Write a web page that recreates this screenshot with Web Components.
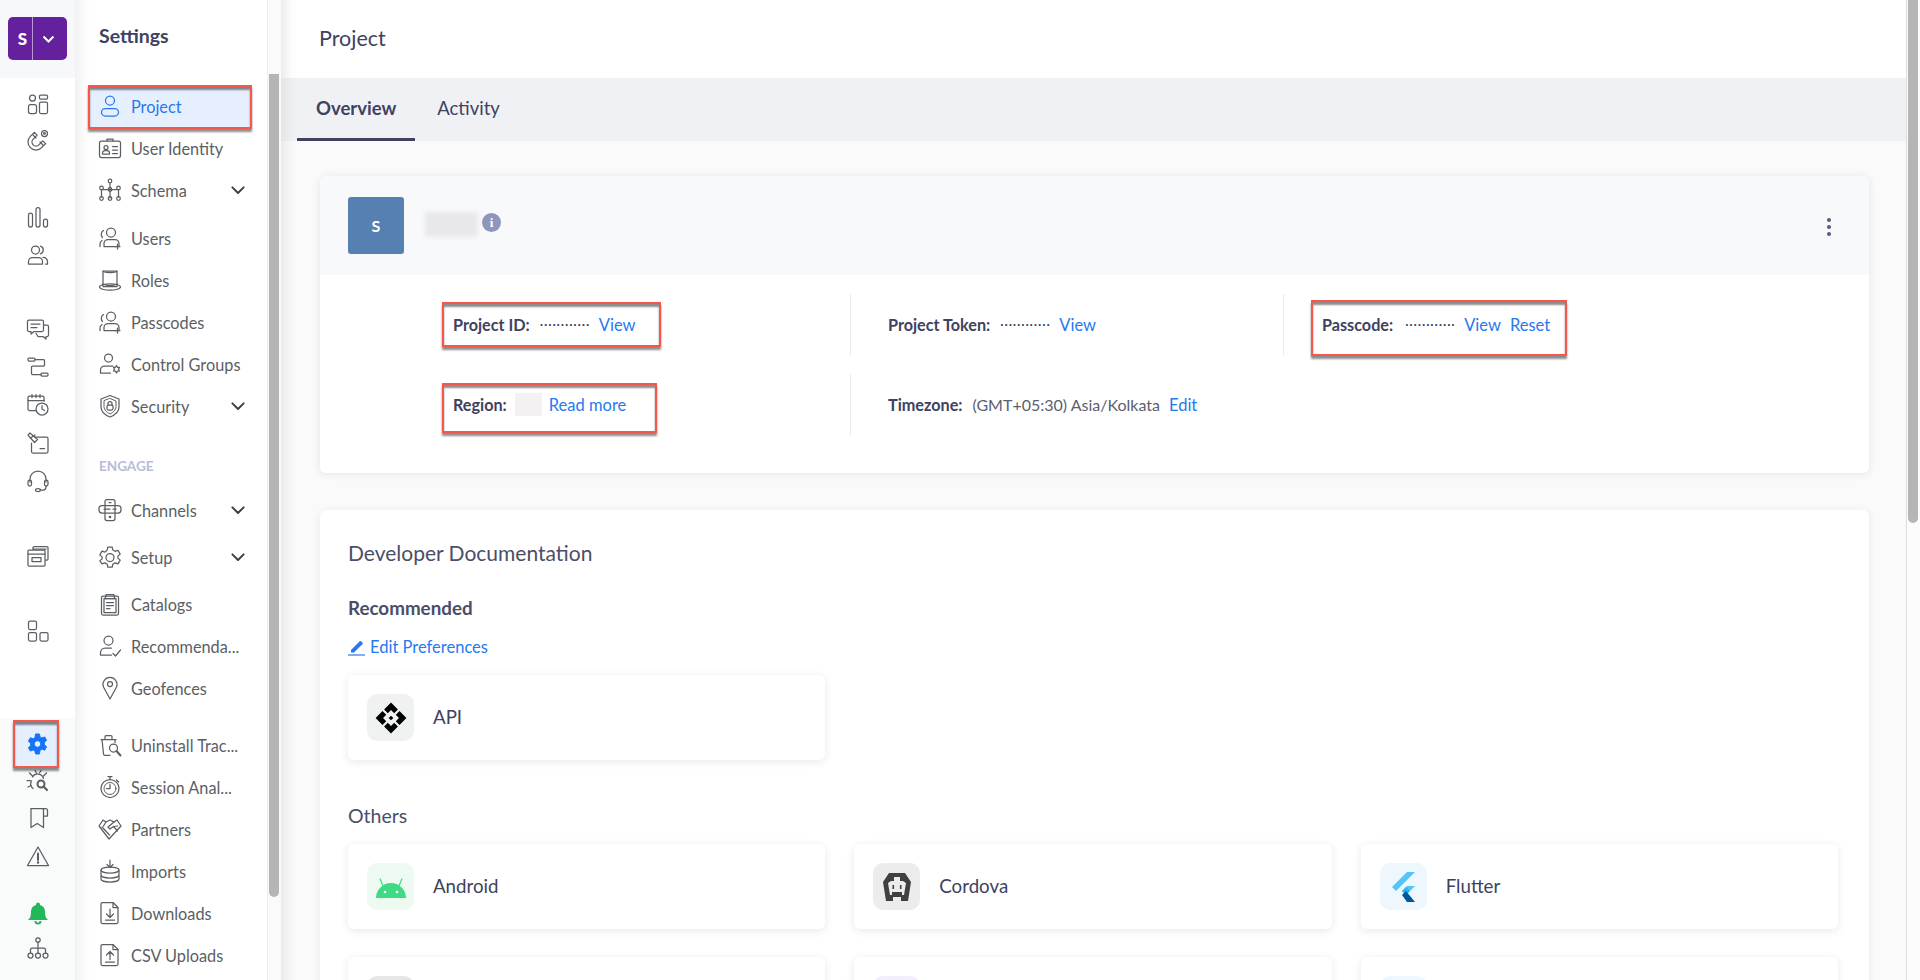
<!DOCTYPE html>
<html>
<head>
<meta charset="utf-8">
<title>Project</title>
<style>
  html, body { margin: 0; height: 980px; overflow: hidden; }
  body { font-family: "Lato", "Liberation Sans", sans-serif; color: #3e4260; background: #fff; display: flex; }
</style>
</head>
<body>
<app-rail></app-rail>
<settings-nav></settings-nav>
<project-page></project-page>

<script>
// stroke icons, all on a 24 box
const ICONS = {
  dashboard: '<circle cx="6.5" cy="6" r="3"/><rect x="13.5" y="3" width="8" height="4" rx="1"/><rect x="2.5" y="12.5" width="8" height="9" rx="2"/><rect x="13.5" y="10" width="8" height="11.5" rx="1.5"/>',
  magnet: '<path d="M8.34 4.34 4.34 8.34A8 8 0 0 0 15.66 19.66L19.66 15.66 16.83 12.83 12.83 16.83A4 4 0 0 1 7.17 11.17L11.17 7.17Z"/><path d="M7 7l3 3M14 14l3 3"/><circle cx="18.5" cy="5.5" r="3"/><circle cx="18.5" cy="5.5" r=".8"/>',
  bars: '<rect x="2.5" y="8" width="4" height="14" rx="2"/><rect x="10" y="2.5" width="4" height="19.5" rx="2"/><rect x="17.5" y="14" width="4" height="8" rx="2"/>',
  people: '<circle cx="9.5" cy="7" r="4"/><path d="M2.5 21v-2.5a4 4 0 0 1 4-4h6a4 4 0 0 1 4 4V21z"/><path d="M14.5 3.2a4 4 0 0 1 0 7.6M17 14.5a4 4 0 0 1 4.5 4V21h-2"/>',
  chat: '<path d="M3 3h13a1.5 1.5 0 0 1 1.5 1.5V13a1.5 1.5 0 0 1-1.5 1.5H8l-3 2.5v-2.5H3A1.5 1.5 0 0 1 1.5 13V4.5A1.5 1.5 0 0 1 3 3z"/><path d="M5 7h9M5 10.5h6"/><path d="M17.5 8H21a1.5 1.5 0 0 1 1.5 1.5V18a1.5 1.5 0 0 1-1.5 1.5h-1V22l-3-2.500h-5l-2-3"/>',
  flow: '<rect x="2" y="3" width="7" height="3" rx="1"/><rect x="15" y="18" width="7" height="3" rx="1"/><path d="M9 4.5h8.500a1 1 0 0 1 1 1V10a1 1 0 0 1-1 1H6.500a1 1 0 0 0-1 1v6.500a1 1 0 0 0 1 1H15"/>',
  calclock: '<path d="M10 17.5H3.5A1.5 1.5 0 0 1 2 16V4.500A1.5 1.5 0 0 1 3.500 3h13A1.5 1.5 0 0 1 18 4.500V8"/><path d="M2 7.500h16M6 1.500v3M10 1.500v3M14 1.500v3"/><circle cx="16" cy="16" r="6"/><path d="M16 12.500V16l2.500 1.500"/>',
  sweep: '<path d="M9 6h11.500a1.500 1.500 0 0 1 1.500 1.500v13a1.500 1.500 0 0 1-1.500 1.500H7a1.500 1.500 0 0 1-1.500-1.500V12"/><path d="M14 17.500h4.500"/><path d="M2 4l2-2 7.500 6.500-3 3z"/><path d="M4.500 7 9 4"/>',
  headset: '<path d="M4 13V10a8 8 0 0 1 16 0v3"/><rect x="2" y="11" width="3.500" height="6" rx="1.700"/><rect x="18.500" y="11" width="3.500" height="6" rx="1.700"/><path d="M20 17v1a3 3 0 0 1-3 3h-3"/><ellipse cx="12" cy="21" rx="2.500" ry="1.500"/>',
  windows: '<path d="M7 5V3.500A1 1 0 0 1 8 2.500h13A1 1 0 0 1 22 3.500V15a1 1 0 0 1-1 1h-1.500"/><rect x="2" y="6" width="17" height="16" rx="1"/><path d="M2 10h17M7 5h13M6 13.500h9v4H6z"/>',
  blocks: '<rect x="2.500" y="2" width="8" height="8.500" rx="1.500"/><rect x="2.500" y="13.500" width="8" height="8.500" rx="1.500"/><rect x="14" y="13.500" width="8" height="8.500" rx="1.500"/>',
  bug: '<path d="M17.500 10.500A6 6 0 0 0 6.500 9M7 20.500A6 6 0 0 1 5.500 13"/><path d="M6.500 8 3.500 5M17.500 8l3-3M4.500 12.500H1M5 17.500l-3 1.500M9 2.500l1.500 2.500M15 2.500 13.500 5"/><circle cx="15" cy="16" r="3.500" stroke-width="2"/><path d="M17.500 18.500 21 22" stroke-width="2.200"/>',
  bookmark: '<path d="M5 2.500h14.500a2 2 0 0 1 2 2V10h-4M17.500 4.500V4a1.500 1.500 0 0 0-1.500-1.500"/><path d="M5 2.500v19l6.200-4 6.300 4V4.500"/>',
  warn: '<path d="M12 3 22.500 21.500h-21z"/><path d="M12 9.500v6.500" stroke-width="2"/><circle cx="12" cy="18.500" r=".6" fill="currentColor"/>',
  tree: '<circle cx="12" cy="4" r="2.200"/><path d="M12 6.200V12M4.500 17v-3.500a1.500 1.500 0 0 1 1.500-1.500h12a1.500 1.500 0 0 1 1.500 1.500V17M12 12v5"/><circle cx="4.500" cy="19.500" r="2.500"/><circle cx="12" cy="19.500" r="2.500"/><circle cx="19.500" cy="19.500" r="2.500"/>',
  user: '<circle cx="12" cy="6.500" r="4.500"/><rect x="3.500" y="14.500" width="17" height="7.500" rx="3.700"/>',
  idcard: '<rect x="1.500" y="5" width="21" height="16.500" rx="2"/><path d="M9 5V3h6v2"/><circle cx="8" cy="11.500" r="2"/><path d="M4.500 18v-1a2.500 2.500 0 0 1 2.500-2.500h2a2.500 2.500 0 0 1 2.500 2.500v1zM14.500 10.500h5M14.500 14h5M14.500 17.500h5"/>',
  schema: '<circle cx="12" cy="3" r="1.800"/><path d="M12 4.800V20M3.500 11.500h17M3.500 11.500V19M20.500 11.500V19"/><circle cx="3.500" cy="10" r="1.800"/><circle cx="20.500" cy="10" r="1.800"/><circle cx="12" cy="11.500" r="1.800"/><circle cx="3.500" cy="20.500" r="1.800"/><circle cx="12" cy="20.500" r="1.800"/><circle cx="20.500" cy="20.500" r="1.800"/>',
  userplus: '<circle cx="13" cy="6.500" r="4.500"/><path d="M5.500 4.500a4.500 4.500 0 0 0-1 7"/><path d="M21 20.500v-3a4 4 0 0 0-4-4H10a4 4 0 0 0-4 4v3h12"/><path d="M2 20.500v-2.500a4 4 0 0 1 2-3.500M19.500 18v5M17 20.500h5"/>',
  hat: '<path d="M5 3h14v15.500H5z"/><path d="M5 3a7 1.500 0 0 0 14 0M5 16c4 2 10 2 14 0"/><ellipse cx="12" cy="19" rx="10.500" ry="3.200"/>',
  control: '<circle cx="10.500" cy="6" r="4"/><path d="M15 14H6.500A4 4 0 0 0 2.500 18v3h10"/><path d="M18.500 13.500l1 1.800 2 .1-1 1.800 1 1.800-2 .1-1 1.800-1-1.800-2-.1 1-1.800-1-1.800 2-.1z"/>',
  shield: '<path d="M12 1.500 21 5v8c0 5-4 8-9 10-5-2-9-5-9-10V5z"/><path d="M12 4.500 18 7v5.500c0 3.500-3 6-6 7.500-3-1.500-6-4-6-7.500V7z" stroke-width="1"/><rect x="9" y="11" width="6" height="5" rx="1.500"/><path d="M10 11V9.500a2 2 0 0 1 4 0V11"/>',
  channels: '<rect x="7" y="1.500" width="10" height="21" rx="2"/><rect x="1" y="7.500" width="22" height="7.500" rx="3"/><path d="M6 11.200h6M15 11.200h3M11 4.500h2"/><circle cx="12" cy="19" r=".7" fill="currentColor"/>',
  gear: '<path d="M9.800 2h4.400l.6 3 2.300 1.300 2.900-1 2.200 3.800-2.300 2 0 2 2.300 2-2.200 3.800-2.900-1-2.300 1.300-.6 3H9.800l-.6-3-2.300-1.300-2.900 1L1.800 15.900l2.300-2 0-2-2.300-2 2.200-3.800 2.900 1L9.200 5z"/><circle cx="12" cy="12.500" r="4"/>',
  clipboard: '<rect x="3.500" y="4" width="17" height="19" rx="1.500"/><rect x="6" y="6.500" width="12" height="14"/><path d="M8 4V2.500h8V4l1 2.500H7zM8.500 10.500h7M8.500 13.500h7M8.500 16.500h3.500"/>',
  rec: '<circle cx="10.500" cy="6.500" r="4.500"/><path d="M13.500 14H7a4.500 4.500 0 0 0-4.500 4.500V21h11"/><path d="M15 19.500l2.500 2.500 5-6"/>',
  pin: '<path d="M12 23 5.500 11a7 7 0 1 1 13 0z"/><circle cx="12" cy="8" r="2.500"/>',
  trash: '<path d="M3 6.500h15M7 6.500V3.500a1 1 0 0 1 1-1h5a1 1 0 0 1 1 1v3"/><path d="M4 6.500 5.500 21a1.500 1.500 0 0 0 1.500 1.300h5"/><path d="M17 6.500v3"/><circle cx="15.500" cy="15" r="4"/><path d="M18.500 18 22.500 22.500" stroke-width="2"/>',
  stopwatch: '<circle cx="12" cy="13.500" r="9"/><circle cx="12" cy="13.500" r="6" stroke-width="1"/><path d="M12 9.500v4H8.500M10 1.500h4M12 1.500v3M18.500 5l2 2"/>',
  handshake: '<path d="M12 3 16 5l3-2 4 6-12 13L1 9l4-6 3 2z"/><path d="M4 10l7.500 8M16 5l-6 5 2 2 3.500-2.500 4 4.500M8 5 5.500 9M15.500 9.500 19.500 9"/>',
  dbdown: '<ellipse cx="12" cy="11" rx="9" ry="3"/><path d="M3 11v9c0 1.700 4 3 9 3s9-1.300 9-3v-9M3 16c0 1.700 4 3 9 3s9-1.300 9-3M12 1v7M9 5.500 12 8.500l3-3"/>',
  docdown: '<path d="M4.500 1.500H15l5 5V21a1.500 1.500 0 0 1-1.500 1.500h-14A1.500 1.500 0 0 1 3 21V3a1.500 1.500 0 0 1 1.500-1.500z"/><path d="M15 1.500V6.500h5M12 8v8M8.500 13 12 16.500 15.500 13M7.500 19h9"/>',
  docup: '<path d="M4.500 1.500H15l5 5V21a1.500 1.500 0 0 1-1.500 1.500h-14A1.500 1.500 0 0 1 3 21V3a1.500 1.500 0 0 1 1.500-1.500z"/><path d="M15 1.500V6.500h5M12 16.500v-8M8.500 12 12 8.500 15.500 12M7.500 19h9"/>',
  chevron: '<path d="M4.500 8.500 12 16l7.500-7.500" stroke-width="2.600"/>'
};

class UiIcon extends HTMLElement {
  connectedCallback() {
    const size = this.getAttribute("size") || 24;
    const root = this.attachShadow({ mode: "open" });
    root.innerHTML = `<style>
      :host { display: inline-flex; width: ${size}px; height: ${size}px; flex: none; }
      svg { width: 100%; height: 100%; fill: none; stroke: currentColor; stroke-width: 1.25; stroke-linecap: round; stroke-linejoin: round; }
    </style><svg viewBox="0 0 24 24">${ICONS[this.getAttribute("name")] || ""}</svg>`;
  }
}
customElements.define("ui-icon", UiIcon);

class RailIcon extends HTMLElement {
  connectedCallback() {
    const root = this.attachShadow({ mode: "open" });
    root.innerHTML = `<style>
      :host { display: flex; align-items: center; justify-content: center; height: 38px; color: #5b5f64; }
    </style><ui-icon name="${this.getAttribute("name")}"></ui-icon>`;
  }
}
customElements.define("rail-icon", RailIcon);

class AppRail extends HTMLElement {
  connectedCallback() {
    const root = this.attachShadow({ mode: "open" });
    root.innerHTML = `<style>
      :host { display: flex; flex-direction: column; width: 75px; height: 980px; flex: none; background: #fff; }
      .top { height: 78px; flex: none; background: #f7f8fb; display: flex; align-items: flex-start; justify-content: center; }
      .logo { margin-top: 17px; width: 59px; height: 43px; border-radius: 5px; background: #65209e; color: #fff; display: flex; font: 700 17px "Lato", sans-serif; }
      .logo b { width: 25px; padding-left: 5px; box-sizing: border-box; display: flex; align-items: center; justify-content: center; border-right: 1px solid #b99ad6; }
      .logo span { flex: 1; padding-right: 4px; display: flex; align-items: center; justify-content: center; }
      .logo svg { width: 13px; height: 8px; fill: none; stroke: #fff; stroke-width: 2; }
      .g { flex: none; }
      .short rail-icon { height: 36px; }
      .bottom { margin-top: auto; height: 262px; flex: none; background: #f9fafa; padding-top: 2px; box-sizing: border-box; }
      .active { height: 48px; display: flex; align-items: center; justify-content: center; padding-left: 2px; box-sizing: border-box; margin: 0 16px 0 13px; background: #e5effd; position: relative; }
      .active::after { content: ""; position: absolute; inset: 0; border: 2px solid #f5574b; box-shadow: 0 3px 2px rgba(0,0,0,.45), inset 0 3px 2px rgba(0,0,0,.45); }
      .bell { display: flex; justify-content: center; margin-top: 26px; height: 24px; }
    </style>
    <div class="top"><div class="logo"><b>S</b><span><svg viewBox="0 0 13 8"><path d="M1.500 1.500 6.500 6.500 11.500 1.500"/></svg></span></div></div>
    <div class="g short" style="margin-top:8px">
      <rail-icon name="dashboard"></rail-icon>
      <rail-icon name="magnet"></rail-icon>
    </div>
    <div class="g" style="margin-top:40px">
      <rail-icon name="bars"></rail-icon>
      <rail-icon name="people"></rail-icon>
    </div>
    <div class="g" style="margin-top:36px">
      <rail-icon name="chat"></rail-icon>
      <rail-icon name="flow"></rail-icon>
      <rail-icon name="calclock"></rail-icon>
      <rail-icon name="sweep"></rail-icon>
      <rail-icon name="headset"></rail-icon>
    </div>
    <div class="g" style="margin-top:37px"><rail-icon name="windows"></rail-icon></div>
    <div class="g" style="margin-top:37px"><rail-icon name="blocks"></rail-icon></div>
    <div class="bottom">
      <div class="active"><svg viewBox="0 0 24 24" style="width:23px;height:23px;fill:#1573f5"><path fill-rule="evenodd" d="M10 1h4l.7 3.100 1.800 1 3-1 2 3.500-2.300 2.100v2.600l2.300 2.100-2 3.500-3-1-1.800 1L14 21.900h-4l-.7-3.100-1.800-1-3 1-2-3.500 2.300-2.100v-2.600L2.500 8.500l2-3.500 3 1 1.800-1zM12 8a3.400 3.400 0 1 0 0 6.900A3.400 3.400 0 0 0 12 8z" stroke="#1573f5" stroke-width="1" stroke-linejoin="round"/></svg></div>
      <rail-icon name="bug" style="margin-top:-7px"></rail-icon>
      <rail-icon name="bookmark"></rail-icon>
      <rail-icon name="warn"></rail-icon>
      <div class="bell"><svg viewBox="0 0 24 24" style="width:24px;height:24px;fill:#22b85a"><path d="M12 1.500a2 2 0 0 1 2 2v.5a7 7 0 0 1 5 6.500c0 5 1 6.500 3 8.500H2c2-2 3-3.500 3-8.500A7 7 0 0 1 10 4v-.5a2 2 0 0 1 2-2z"/><path d="M8.500 20h7a3.500 3.500 0 0 1-7 0zm2 0a1.500 1.500 0 0 0 3 0z" fill-rule="evenodd"/></svg></div>
      <rail-icon name="tree" style="margin-top:4px"></rail-icon>
    </div>`;
  }
}
customElements.define("app-rail", AppRail);

class NavItem extends HTMLElement {
  connectedCallback() {
    const root = this.attachShadow({ mode: "open" });
    const more = this.hasAttribute("more")
      ? `<ui-icon class="more" name="chevron" size="18"></ui-icon>` : "";
    root.innerHTML = `<style>
      :host { display: flex; align-items: center; height: 42px; padding-left: 23px; margin-right: 13px; position: relative; color: #5b5f64; font-size: 16.3px; white-space: nowrap; }
      ui-icon { margin-right: 9px; }
      .more { margin: 0 7px 0 auto; color: #3b3f45; }
      :host([active]) { color: #2878f0; background: #e5effd; margin: 0 15px 0 13px; padding-left: 10px; }
      :host([active])::after { content: ""; position: absolute; inset: 0 0 -2px 0; border: 2px solid #f5574b; box-shadow: 0 3px 2px rgba(0,0,0,.45), inset 0 3px 2px rgba(0,0,0,.45); }
    </style><ui-icon name="${this.getAttribute("icon")}"></ui-icon><span><slot></slot></span>${more}`;
  }
}
customElements.define("nav-item", NavItem);

class SettingsNav extends HTMLElement {
  connectedCallback() {
    const root = this.attachShadow({ mode: "open" });
    root.innerHTML = `<style>
      :host { display: flex; width: 206px; height: 980px; flex: none; background: #fff; box-shadow: inset 18px 0 14px -14px #ececec; overflow: hidden; }
      .list { flex: 1; min-width: 0; }
      h2 { margin: 0; padding: 24px 0 0 24px; height: 60px; box-sizing: border-box; font-size: 19.5px; font-weight: 700; color: #3e4260; }
      .label { margin: 29px 0 0 24px; height: 20px; line-height: 20px; font-size: 13.5px; font-weight: 700; color: #b7bcd8; }
      .bar { width: 14px; flex: none; border-left: 1px solid #eee; box-sizing: border-box; background: #fafafa; }
      .thumb { margin: 74px 0 0 1px; height: 823px; width: 10px; background: #b5b5b5; border-radius: 0 0 5px 5px; }
    </style>
    <div class="list">
      <h2>Settings</h2>
      <nav-item icon="user" active style="margin-top:25px">Project</nav-item>
      <nav-item icon="idcard">User Identity</nav-item>
      <nav-item icon="schema" more>Schema</nav-item>
      <nav-item icon="userplus" style="margin-top:6px">Users</nav-item>
      <nav-item icon="hat">Roles</nav-item>
      <nav-item icon="userplus">Passcodes</nav-item>
      <nav-item icon="control">Control Groups</nav-item>
      <nav-item icon="shield" more>Security</nav-item>
      <div class="label">ENGAGE</div>
      <nav-item icon="channels" more style="margin-top:13px">Channels</nav-item>
      <nav-item icon="gear" more style="margin-top:5px">Setup</nav-item>
      <nav-item icon="clipboard" style="margin-top:5px">Catalogs</nav-item>
      <nav-item icon="rec">Recommenda...</nav-item>
      <nav-item icon="pin">Geofences</nav-item>
      <nav-item icon="trash" style="margin-top:15px">Uninstall Trac...</nav-item>
      <nav-item icon="stopwatch">Session Anal...</nav-item>
      <nav-item icon="handshake">Partners</nav-item>
      <nav-item icon="dbdown">Imports</nav-item>
      <nav-item icon="docdown">Downloads</nav-item>
      <nav-item icon="docup">CSV Uploads</nav-item>
    </div>
    <div class="bar"><div class="thumb"></div></div>`;
  }
}
customElements.define("settings-nav", SettingsNav);

class InfoField extends HTMLElement {
  connectedCallback() {
    const root = this.attachShadow({ mode: "open" });
    root.innerHTML = `<style>
      :host { display: inline-flex; align-items: center; height: 24px; position: relative; font-size: 16px; color: #5b5f6e; white-space: nowrap; }
      b { font-size: 16.2px; font-weight: 700; color: #3e4260; margin-right: var(--gap, 10px); }
      :host([marked])::after { content: ""; position: absolute; top: var(--mt); bottom: var(--mb); left: -11px; right: var(--mr); border: 2px solid #f5574b; box-shadow: 0 3px 2px rgba(0,0,0,.45), inset 0 3px 2px rgba(0,0,0,.45); }
    </style><b>${this.getAttribute("label")}</b><slot></slot>`;
  }
}
customElements.define("info-field", InfoField);

class DotMask extends HTMLElement {
  connectedCallback() {
    this.attachShadow({ mode: "open" }).innerHTML = `<style>
      :host { display: inline-block; width: 50px; overflow: hidden; font: 700 12px/24px "Liberation Sans", sans-serif; letter-spacing: .2px; color: #3e4260; }
    </style>············`;
  }
}
customElements.define("dot-mask", DotMask);

class RegionMask extends HTMLElement {
  connectedCallback() {
    this.attachShadow({ mode: "open" }).innerHTML = `<style>
      :host { display: block; width: 27px; height: 23px; margin-right: -2px; background: #f3f1f2; }
    </style>`;
  }
}
customElements.define("region-mask", RegionMask);

class LinkText extends HTMLElement {
  connectedCallback() {
    this.attachShadow({ mode: "open" }).innerHTML = `<style>
      :host { color: #2878f0; margin-left: 9px; font-size: 16.5px; }
    </style><slot></slot>`;
  }
}
customElements.define("link-text", LinkText);

class ProjectCard extends HTMLElement {
  connectedCallback() {
    const root = this.attachShadow({ mode: "open" });
    root.innerHTML = `<style>
      :host { display: block; background: #fff; border-radius: 6px; box-shadow: 0 1px 8px rgba(40,44,70,.1); overflow: hidden; }
      .head { height: 99px; background: #f8f9fb; display: flex; align-items: center; padding: 0 28px; box-sizing: border-box; }
      .avatar { width: 56px; height: 57px; border-radius: 3px; background: #5680b2; color: #fff; font-weight: 700; font-size: 16px; display: flex; align-items: center; justify-content: center; }
      .name { width: 53px; height: 25px; margin: -2px 4px 0 21px; background: #e8e8eb; filter: blur(2px); }
      .info { width: 19px; height: 19px; margin-top: -7px; border-radius: 50%; background: #8f96bb; color: #fff; font: 700 13px/19px "Liberation Serif", serif; text-align: center; }
      .kebab { margin: 2px 10px 0 auto; display: flex; flex-direction: column; gap: 3px; }
      .kebab i { width: 4px; height: 4px; border-radius: 50%; background: #565b80; }
      .grid { display: grid; grid-template-columns: 531px 433px 1fr; grid-auto-rows: 61px; row-gap: 19px; padding: 19px 0 38px; }
      .cell { display: flex; align-items: center; padding-left: 37px; }
      .cell.first { padding-left: 133px; }
      .cell.rule { border-right: 1px solid #ebebeb; }
      .cell.last { padding-left: 38px; }
    </style>
    <div class="head">
      <div class="avatar">S</div><div class="name"></div><div class="info">i</div>
      <div class="kebab"><i></i><i></i><i></i></div>
    </div>
    <div class="grid">
      <div class="cell first rule"><slot name="id"></slot></div>
      <div class="cell rule"><slot name="token"></slot></div>
      <div class="cell last"><slot name="pass"></slot></div>
      <div class="cell first rule"><slot name="region"></slot></div>
      <div class="cell"><slot name="zone"></slot></div>
    </div>`;
  }
}
customElements.define("project-card", ProjectCard);

class DocCard extends HTMLElement {
  connectedCallback() {
    const root = this.attachShadow({ mode: "open" });
    root.innerHTML = `<style>
      :host { display: flex; align-items: center; height: 85px; padding-left: 19px; box-sizing: border-box; background: #fff; border-radius: 6px; box-shadow: 0 2px 8px rgba(40,44,70,.1); font-size: 18.7px; color: #3e4260; }
      .tile { width: 47px; height: 47px; border-radius: 10px; margin-right: 19px; display: flex; align-items: center; justify-content: center; background: var(--tile, #f0f2f2); flex: none; }
      span { margin-top: -2px; }
    </style><div class="tile"><slot name="logo"></slot></div><span><slot></slot></span>`;
  }
}
customElements.define("doc-card", DocCard);

class ProjectPage extends HTMLElement {
  connectedCallback() {
    const root = this.attachShadow({ mode: "open" });
    root.innerHTML = `<style>
      :host { display: flex; flex: 1; min-width: 0; height: 980px; overflow: hidden; }
      .main { flex: 1; min-width: 0; background: #fafafa; box-shadow: inset 18px 0 14px -14px #e6e6e6; }
      header { height: 78px; background: #fff; box-shadow: inset 18px 0 14px -14px #e6e6e6; padding: 25px 0 0 38px; box-sizing: border-box; font-size: 21.5px; color: #3e4260; }
      .tabs { height: 63px; background: #f0f1f5; box-shadow: inset 18px 0 14px -14px #e0e0e0; display: flex; padding-left: 16px; box-sizing: border-box; font-size: 18.5px; }
      .tab { height: 63px; box-sizing: border-box; padding: 19px 19px 0; }
      .tab.on { font-weight: 700; border-bottom: 3px solid #3e4260; margin-right: 3px; }
      .content { padding: 35px 37px 0 39px; }
      .docs { margin-top: 37px; background: #fff; border-radius: 6px; box-shadow: 0 1px 8px rgba(40,44,70,.08); padding: 30px 31px 40px 28px; height: 600px; box-sizing: border-box; }
      h3 { margin: 0; font-size: 21px; line-height: 26px; font-weight: 400; color: #4a4e69; }
      h4 { margin: 31px 0 0; font-size: 18.8px; line-height: 22px; font-weight: 700; color: #4a4e69; }
      h4.others { margin-top: 45px; font-size: 19.5px; font-weight: 400; }
      .edit { display: flex; align-items: center; gap: 5px; margin-top: 17px; height: 22px; color: #2878f0; font-size: 16.5px; }
      .edit svg { width: 17px; height: 17px; }
      .grid { display: grid; grid-template-columns: repeat(3, 1fr); column-gap: 29px; row-gap: 28px; margin-top: 17px; }
      .scroll { width: 14px; flex: none; background: #fcfcfc; border-left: 1px solid #ddd; box-sizing: border-box; }
      .scroll div { margin: 0 1px; width: 10px; height: 523px; border-radius: 0 0 5px 5px; background: #b5b5b5; }
      svg { display: block; }
    </style>
    <div class="main">
      <header>Project</header>
      <div class="tabs"><div class="tab on">Overview</div><div class="tab">Activity</div></div>
      <div class="content">
        <project-card>
          <info-field slot="id" marked label="Project ID:" style="--mt:-11px;--mb:-10px;--mr:-25px"><dot-mask></dot-mask><link-text>View</link-text></info-field>
          <info-field slot="token" label="Project Token:"><dot-mask></dot-mask><link-text>View</link-text></info-field>
          <info-field slot="pass" marked label="Passcode:" style="--gap:12px;--mt:-13px;--mb:-19px;--mr:-17px"><dot-mask></dot-mask><link-text>View</link-text><link-text>Reset</link-text></info-field>
          <info-field slot="region" marked label="Region:" style="--gap:8px;--mt:-10px;--mb:-16px;--mr:-31px"><region-mask></region-mask><link-text>Read more</link-text></info-field>
          <info-field slot="zone" label="Timezone:">(GMT+05:30) Asia/Kolkata<link-text>Edit</link-text></info-field>
        </project-card>
        <div class="docs">
          <h3>Developer Documentation</h3>
          <h4>Recommended</h4>
          <div class="edit"><svg viewBox="0 0 17 17"><path fill="#2878f0" d="M3 11 11.500 2.500a1.300 1.300 0 0 1 1.800 0l1 1a1.300 1.300 0 0 1 0 1.800L6 13.500H3z"/><path stroke="#2878f0" stroke-width="1.200" d="M0 16h17"/></svg><span>Edit Preferences</span></div>
          <div class="grid">
            <doc-card><svg slot="logo" width="34" height="34" viewBox="0 0 32 32"><path d="M16 1.500 22.500 8 19 11.500 16 8.500 13 11.500 9.500 8z"/><path d="M16 1.500 22.500 8 19 11.500 16 8.500 13 11.500 9.500 8z" transform="rotate(90 16 16)"/><path d="M16 1.500 22.500 8 19 11.500 16 8.500 13 11.500 9.500 8z" transform="rotate(180 16 16)"/><path d="M16 1.500 22.500 8 19 11.500 16 8.500 13 11.500 9.500 8z" transform="rotate(270 16 16)"/><path d="M16 13.800 18.200 16 16 18.200 13.800 16z"/></svg>API</doc-card>
          </div>
          <h4 class="others">Others</h4>
          <div class="grid">
            <doc-card style="--tile:#ecfaf1"><svg slot="logo" width="32" height="32" viewBox="0 0 32 32"><path d="M1 27a15 15 0 0 1 30 0z" fill="#3ddc84"/><path d="M8 15 5 7.500M24 15l3-7.500" stroke="#3ddc84" stroke-width="1.200"/><circle cx="10" cy="21" r="1.300" fill="#fff"/><circle cx="22" cy="21" r="1.300" fill="#fff"/></svg>Android</doc-card>
            <doc-card style="--tile:#ececec"><svg slot="logo" width="30" height="30" viewBox="0 0 30 30"><path fill="#404040" d="M7 1h16l6 9-3 19h-7v-4h-8v4H4L1 10z"/><path fill="#ececec" d="M9 9h3V5h6v4h3l3 2-2 12h-2v-3H10v3H8L6 11z"/><rect x="12" y="2" width="6" height="3" fill="#404040"/><rect x="10.500" y="13" width="1.600" height="4" fill="#404040"/><rect x="17.900" y="13" width="1.600" height="4" fill="#404040"/></svg>Cordova</doc-card>
            <doc-card style="--tile:#eff7fe"><svg slot="logo" width="26" height="32" viewBox="0 0 26 32"><path fill="#54c5f8" d="M17 1h8L6 20l-4-4zM17 15h8l-9 9-4-4z"/><path fill="#29b6f6" d="M12 20l4-4 4 4-4 4z"/><path fill="#01579b" d="M12 24l4-4 9 11h-8z"/></svg>Flutter</doc-card>
            <doc-card style="--tile:#e6e6e6"></doc-card>
            <doc-card style="--tile:#f4eefc"></doc-card>
            <doc-card style="--tile:#eff7fe"></doc-card>
          </div>
        </div>
      </div>
    </div>
    <div class="scroll"><div></div></div>`;
  }
}
customElements.define("project-page", ProjectPage);
</script>
</body>
</html>
